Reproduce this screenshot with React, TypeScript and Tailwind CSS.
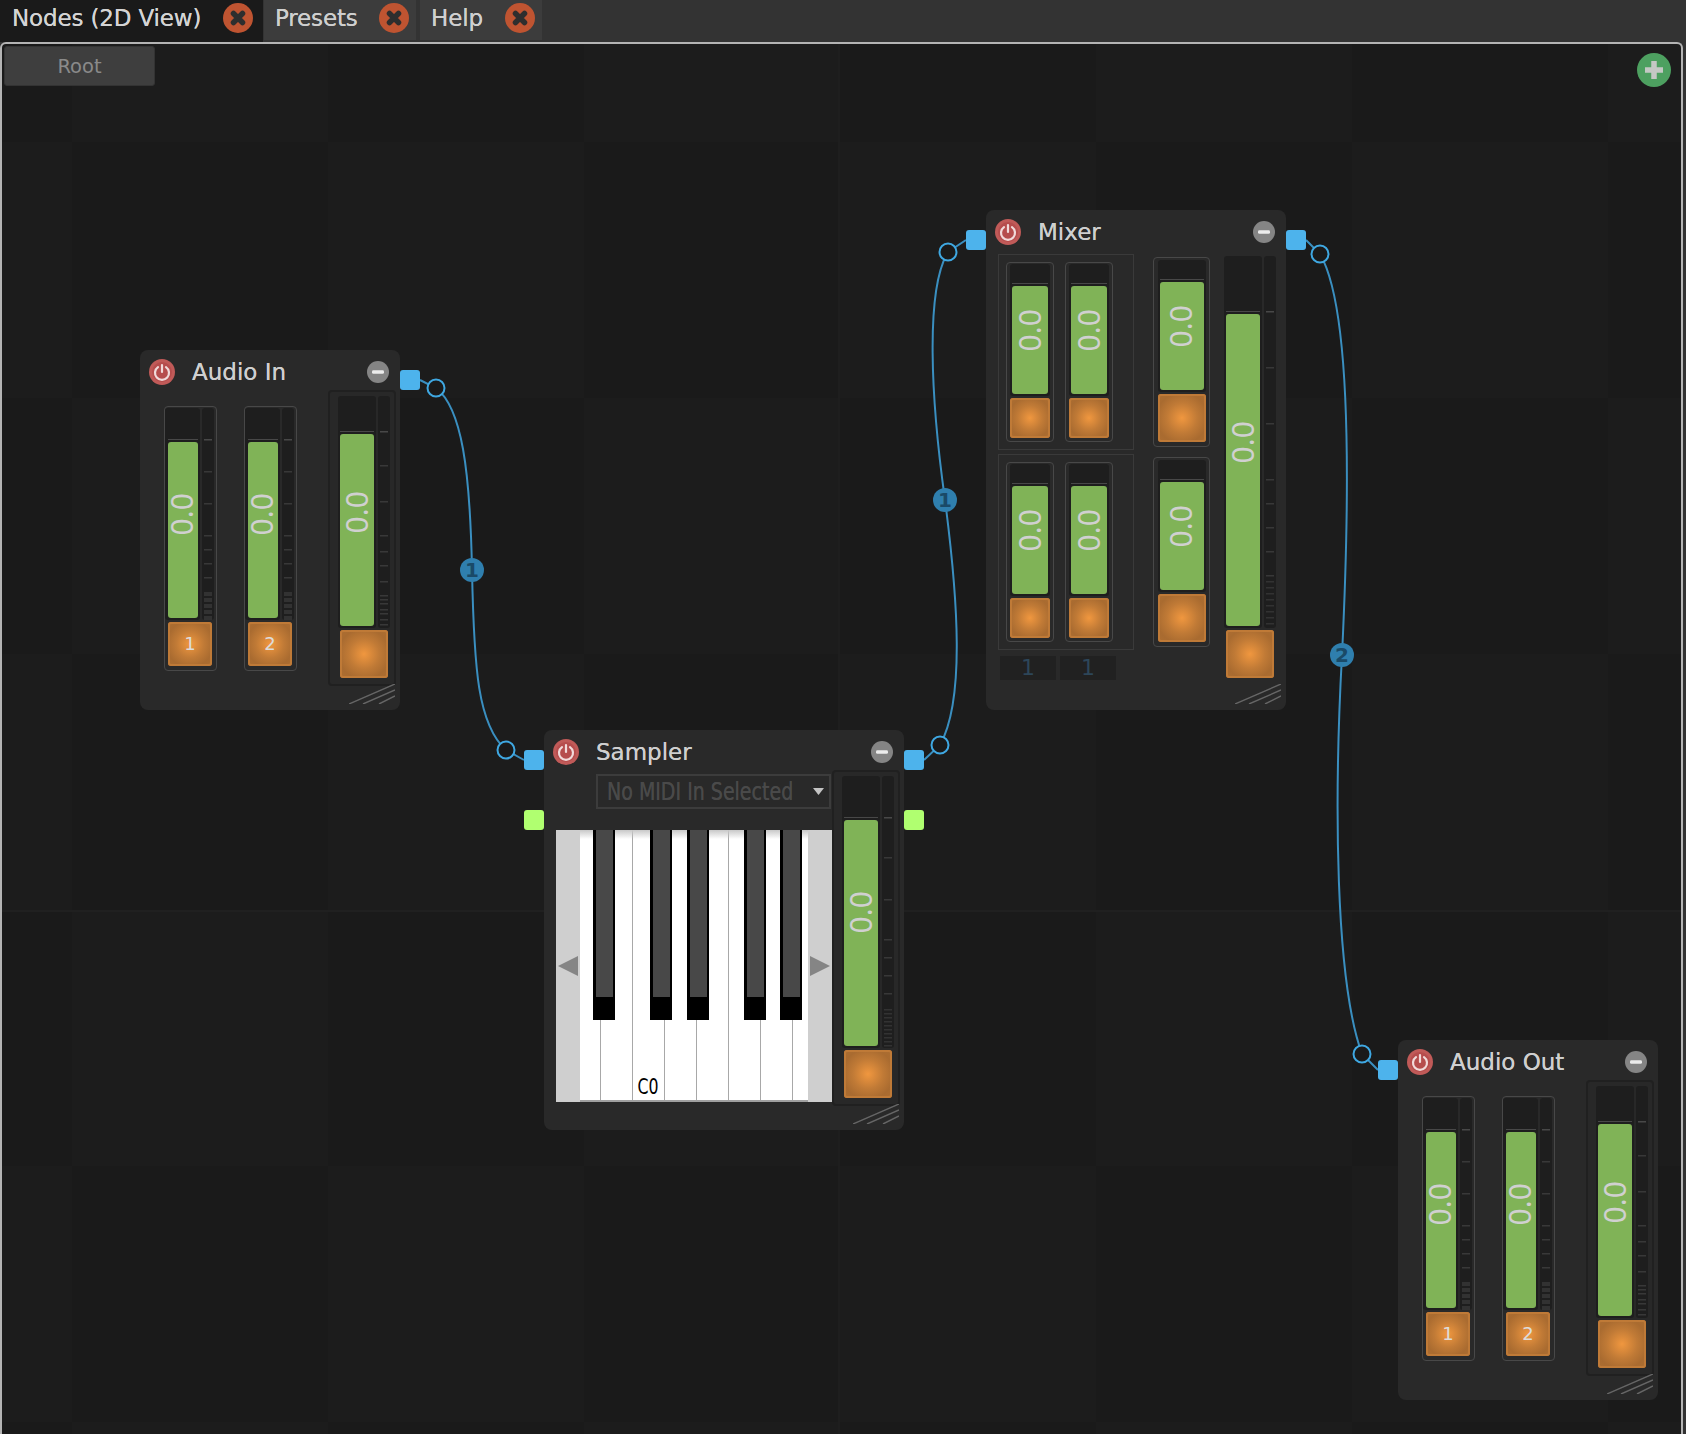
import React from "react";

const CloseIcon = () => (
  <svg width="30" height="30" viewBox="0 0 30 30" className="shrink-0">
    <circle cx="15" cy="15" r="15" fill="#bf5431" />
    <path d="M10.5 10.5 L19.5 19.5 M19.5 10.5 L10.5 19.5" stroke="#2e2e2e" strokeWidth="5.5" strokeLinecap="round" />
  </svg>
);

const PowerIcon = () => (
  <svg width="26" height="26" viewBox="0 0 26 26" className="shrink-0">
    <circle cx="13" cy="13" r="13" fill="#c05a58" />
    <circle cx="13" cy="13" r="10" fill="#b64d4d" />
    <path d="M9 8.2 A7 7 0 1 0 17 8.2" fill="none" stroke="#f1dada" strokeWidth="2.2" strokeLinecap="round" />
    <path d="M13 6 V13" stroke="#f1dada" strokeWidth="2.2" strokeLinecap="round" />
  </svg>
);

const MinusIcon = () => (
  <svg width="22" height="22" viewBox="0 0 22 22" className="shrink-0">
    <circle cx="11" cy="11" r="11" fill="#858585" />
    <rect x="5" y="9.2" width="12" height="3.6" rx="1.4" fill="#ececec" />
  </svg>
);

const Resizer = () => (
  <svg width="46" height="20" viewBox="0 0 46 20" className="absolute right-[5px] bottom-[6px]">
    <path d="M0 20 L46 0 M14 20 L46 6 M30 20 L46 12" stroke="#666666" strokeWidth="1.4" fill="none" />
  </svg>
);

const Port = ({ cls }: { cls: string }) => <div className={`absolute h-[20px] w-[20px] rounded-[3px] ${cls}`} />;

const Header = ({ title }: { title: string }) => (
  <div className="flex h-[26px] items-center pl-[9px] pr-[11px] mt-[9px]">
    <PowerIcon />
    <span className="ml-[17px] text-[23px] leading-none text-[#cfcfcf] [text-shadow:0_0_0.6px_#cfcfcf]">{title}</span>
    <span className="ml-auto">
      <MinusIcon />
    </span>
  </div>
);

const Meter = ({ cls, h, ticks, bars = [], barH = 4 }: { cls: string; h: number; ticks: number[]; bars?: number[]; barH?: number }) => (
  <div className={`shrink-0 rounded-[3px] bg-[#1e1e1e] ${cls}`}>
    <svg width="12" height={h} viewBox={`0 0 12 ${h}`} className="block">
      {ticks.map((y, i) => (
        <rect key={i} x="2" y={y} width="8" height="1.5" fill={i === 0 ? "#484848" : "#383838"} />
      ))}
      {bars.map((y, i) => (
        <rect key={i} x="2" y={y} width="8" height={barH} fill="#323232" />
      ))}
    </svg>
  </div>
);

const Slot = ({ slot, green, line, text }: { slot: string; green: string; line: string; text: string }) => (
  <div className={`flex shrink-0 flex-col items-center justify-end rounded-[3px] bg-[#1e1e1e] pb-[2px] ${slot}`}>
    <div className={`h-[1.5px] bg-[#484848] ${line}`} />
    <div className={`mt-[2px] flex items-start justify-center rounded-[3px] bg-[#80b357] ${green} ${text}`}>
      <span className="-ml-[1px] rotate-180 font-['Noto_Sans',sans-serif] text-[30px] font-normal leading-none text-[#d0d0d0] [writing-mode:vertical-rl]">
        0.0
      </span>
    </div>
  </div>
);

const Knob = ({ cls, label }: { cls: string; label?: string }) => (
  <div
    className={`flex shrink-0 items-center justify-center rounded-[3px] bg-[radial-gradient(circle,#f0973f_0%,#c07a36_45%,#a96b30_75%,#ad6e31_100%)] text-[18px] leading-none text-[#dcdcdc] shadow-[inset_0_0_0_2px_#bf7a37] ${cls}`}
  >
    {label}
  </div>
);

const audioTicks = [31, 63, 95, 127, 141, 155, 169];
const audioBars = [184, 190, 196, 202, 208];
const ChannelStrip = ({ label }: { label: string }) => (
  <div className="mt-[21px] flex h-[265px] w-[53px] shrink-0 flex-col rounded-[4px] border-[1.5px] border-[#484848] pt-[1px]">
    <div className="flex gap-[2px]">
      <Slot slot="h-[212px] w-[35px]" line="w-[30px]" green="h-[176px] w-[30px]" text="pt-[51px]" />
      <Meter cls="w-[12px]" h={212} ticks={audioTicks} bars={audioBars} />
    </div>
    <Knob cls="ml-[3px] mt-[2px] h-[44px] w-[44px]" label={label} />
  </div>
);

const MasterBox = ({ cls, children }: { cls: string; children: React.ReactNode }) => (
  <div className={`shrink-0 rounded-[4px] border-[2px] border-[#202020] bg-[#282828] pl-[8px] pt-[4px] ${cls}`}>{children}</div>
);

const AudioMaster = () => (
  <MasterBox cls="ml-[31px] mt-[5px] h-[296px] w-[68px]">
    <div className="flex gap-[2px]">
      <Slot slot="h-[232px] w-[38px]" line="w-[34px]" green="h-[192px] w-[34px]" text="pt-[57px]" />
      <Meter cls="w-[12px]" h={232} ticks={[35, 69, 105, 139, 155, 169, 185, 199, 203, 207, 213, 217, 223, 228]} />
    </div>
    <Knob cls="ml-[2px] mt-[2px] h-[48px] w-[48px]" />
  </MasterBox>
);

const AudioNode = ({ cls, title }: { cls: string; title: string }) => (
  <div className={`absolute h-[360px] w-[260px] rounded-[8px] bg-[#292929] ${cls}`}>
    <Header title={title} />
    <div className="flex items-start gap-[27px] pl-[24px]">
      <ChannelStrip label="1" />
      <ChannelStrip label="2" />
      <div className="-ml-[27px]">
        <AudioMaster />
      </div>
    </div>
    <Resizer />
  </div>
);

const MiniStrip = () => (
  <div className="flex h-[180px] w-[48px] flex-col items-center rounded-[4px] border-[1.5px] border-[#484848] pt-[1px]">
    <Slot slot="h-[132px] w-[40px]" line="w-[36px]" green="h-[108px] w-[36px]" text="pt-[23px]" />
    <Knob cls="mt-[2px] h-[40px] w-[40px]" />
  </div>
);

const WideStrip = () => (
  <div className="flex h-[190px] w-[57px] flex-col items-center rounded-[4px] border-[1.5px] border-[#484848] pt-[2px]">
    <Slot slot="h-[132px] w-[48px]" line="w-[44px]" green="h-[108px] w-[44px]" text="pt-[23px]" />
    <Knob cls="mt-[2px] h-[48px] w-[48px]" />
  </div>
);

const Group = () => (
  <div className="flex h-[196px] w-[136px] gap-[11px] border border-[#3a3a3a] pl-[7px] pt-[7px]">
    <MiniStrip />
    <MiniStrip />
  </div>
);

const IndexBox = () => (
  <div className="flex h-[24px] w-[56px] items-center justify-center bg-[#212121] text-[22px] leading-none text-[#2d4659]">1</div>
);

const mixerBars = Array.from({ length: 8 }, (_, i) => 325 + i * 6);

const Mixer = () => (
  <div className="absolute left-[984px] top-[166px] h-[500px] w-[300px] rounded-[8px] bg-[#292929]">
    <Header title="Mixer" />
    <div className="flex items-start pl-[12px]">
      <div className="mt-[9px] flex flex-col gap-[4px]">
        <Group />
        <Group />
        <div className="ml-[2px] mt-[2px] flex gap-[4px]">
          <IndexBox />
          <IndexBox />
        </div>
      </div>
      <div className="ml-[19px] mt-[12px] flex flex-col gap-[10px]">
        <WideStrip />
        <WideStrip />
      </div>
      <div className="ml-[14px] mt-[11px]">
        <div className="flex gap-[2px]">
          <Slot slot="h-[372px] w-[38px]" line="w-[34px]" green="h-[312px] w-[34px]" text="pt-[107px]" />
          <Meter cls="w-[12px]" h={372} ticks={[55, 111, 167, 223, 247, 271, 295, 319]} bars={mixerBars} barH={1.5} />
        </div>
        <Knob cls="ml-[2px] mt-[2px] h-[48px] w-[48px]" />
      </div>
    </div>
    <Resizer />
  </div>
);

const Triangle = ({ dir }: { dir: "l" | "r" }) => (
  <svg width="20" height="20" viewBox="0 0 20 20">
    <path d={dir === "l" ? "M0 10 L20 0 V20 Z" : "M20 10 L0 0 V20 Z"} fill="#858585" />
  </svg>
);

const whiteKeys = ["w-[21px]", "w-[32px]", "w-[32px]", "w-[32px]", "w-[32px]", "w-[32px]", "w-[32px]", "w-[15px]"];
const blackKeys = ["left-[13px]", "left-[70px]", "left-[107px]", "left-[164px]", "left-[200px]"];

const Keyboard = () => (
  <div className="mt-[21px] flex h-[272px] w-[276px]">
    <div className="flex w-[24px] items-center justify-center bg-[#cfcfcf]">
      <Triangle dir="l" />
    </div>
    <div className="relative flex w-[228px] border-b-[2px] border-[#a0a0a0] bg-white">
      {whiteKeys.map((w, i) => (
        <div
          key={i}
          className={`box-border flex h-full items-end justify-center ${w} ${i < whiteKeys.length - 1 ? "border-r-[1.5px] border-[#a8a8a8]" : ""}`}
        >
          {i === 2 && (
            <span className="mb-[2px] scale-x-75 font-['DejaVu_Sans',sans-serif] text-[21px] leading-none text-black">C0</span>
          )}
        </div>
      ))}
      <div className="absolute left-0 right-0 top-0 h-[9px] bg-gradient-to-b from-[#c8c8c8] to-transparent" />
      {blackKeys.map((l) => (
        <div key={l} className={`absolute top-0 h-[190px] w-[22px] bg-black ${l}`}>
          <div className="ml-[3px] h-[167px] w-[17px] bg-[#484848]" />
        </div>
      ))}
    </div>
    <div className="flex w-[24px] items-center justify-center bg-[#cfcfcf]">
      <Triangle dir="r" />
    </div>
  </div>
);

const samplerTicks = [41, 81, 123, 163, 181, 199, 217];
const samplerBars = Array.from({ length: 10 }, (_, i) => 233 + i * 4);

const Sampler = () => (
  <div className="absolute left-[542px] top-[686px] h-[400px] w-[360px] rounded-[8px] bg-[#292929]">
    <Header title="Sampler" />
    <div className="flex items-start pl-[12px]">
      <div className="flex w-[276px] shrink-0 flex-col">
        <div className="ml-[40px] mt-[9px] flex h-[35px] w-[235px] items-center overflow-hidden border-[2px] border-[#3c3c3c] pl-[9px]">
          <span className="w-[184px] origin-left scale-x-[0.76] whitespace-nowrap text-[25px] leading-none text-[#4a4a4a] [text-shadow:0_0_0.6px_#4a4a4a]">
            No MIDI In Selected
          </span>
          <svg width="11" height="7" viewBox="0 0 11 7" className="ml-auto mr-[5px]">
            <path d="M0 0 H11 L5.5 7 Z" fill="#c4c4c4" />
          </svg>
        </div>
        <Keyboard />
      </div>
      <MasterBox cls="mt-[5px] h-[336px] w-[68px]">
        <div className="flex gap-[2px]">
          <Slot slot="h-[272px] w-[38px]" line="w-[34px]" green="h-[226px] w-[34px]" text="pt-[71px]" />
          <Meter cls="w-[12px]" h={272} ticks={samplerTicks} bars={samplerBars} barH={1.5} />
        </div>
        <Knob cls="ml-[2px] mt-[2px] h-[48px] w-[48px]" />
      </MasterBox>
    </div>
    <Resizer />
  </div>
);

const Cables = () => (
  <svg width="1686" height="1434" viewBox="0 0 1686 1434" className="pointer-events-none absolute -left-[2px] -top-[44px]">
    <g fill="none" stroke="#3a8fc0" strokeWidth="2">
      <path d="M420 380 L436 388 C462 408 470 470 472 570 C474 670 478 725 506 750 L524 760" />
      <path d="M924 760 L940 745 C965 700 958 600 945 500 C931 400 925 290 948 252 L966 240" />
      <path d="M1306 240 L1320 254 C1347 300 1352 450 1342 655 C1334 800 1335 980 1362 1054 L1378 1070" />
    </g>
    <g fill="#1a1a1a" stroke="#3fa8e2" strokeWidth="2">
      <circle cx="436" cy="388" r="8.5" />
      <circle cx="506" cy="750" r="8.5" />
      <circle cx="940" cy="745" r="8.5" />
      <circle cx="948" cy="252" r="8.5" />
      <circle cx="1320" cy="254" r="8.5" />
      <circle cx="1362" cy="1054" r="8.5" />
    </g>
    <g fill="#2f7fae">
      <circle cx="472" cy="570" r="12" />
      <circle cx="945" cy="500" r="12" />
      <circle cx="1342" cy="655" r="12" />
    </g>
    <g fill="#1a4a68" fontSize="20" fontWeight="700" textAnchor="middle" fontFamily="'DejaVu Sans', sans-serif">
      <text x="472" y="577">1</text>
      <text x="945" y="507">1</text>
      <text x="1342" y="662">2</text>
    </g>
  </svg>
);

const tabs = [
  { label: "Nodes (2D View)", cls: "w-[263px] h-[42px] bg-[#1a1a1a] pl-[12px] pr-[10px] text-[#d4d4d4]" },
  { label: "Presets", cls: "ml-[1px] w-[152px] h-[40px] bg-[#3c3c3c] pl-[11px] pr-[7px] text-[#cfcfcf]" },
  { label: "Help", cls: "ml-[4px] w-[122px] h-[40px] bg-[#3c3c3c] pl-[11px] pr-[7px] text-[#cfcfcf]" },
];

export default function App() {
  return (
    <div className="flex h-[1434px] w-[1686px] flex-col overflow-hidden bg-[#333333] font-['DejaVu_Sans',sans-serif]">
      <div className="flex h-[42px] shrink-0 items-start">
        {tabs.map((t) => (
          <div key={t.label} className={`flex items-start justify-between pt-[3px] text-[23px] leading-[30px] tracking-[-0.15px] [text-shadow:0_0_0.6px_#cfcfcf] ${t.cls}`}>
            <span>{t.label}</span>
            <CloseIcon />
          </div>
        ))}
      </div>
      <div className="relative w-[1683px] flex-1 rounded-t-[6px] border-l-[2px] border-r-[2px] border-t-[2px] border-[#b4b4b4] pl-[2px] pt-[2px] [background:linear-gradient(#202020,#202020)_0_866px/100%_2px_no-repeat,linear-gradient(#1e1e1e,#1e1e1e)_836px_0/2px_100%_no-repeat,conic-gradient(#1a1a1a_25%,#1c1c1c_0_50%,#1a1a1a_0_75%,#1c1c1c_0)_70px_866px/512px_512px]">
        <div className="flex h-[40px] w-[151px] items-center justify-center rounded-[3px] border border-[#333333] bg-[#3e3e3e] pt-[1px] text-[19.5px] leading-none text-[#8a8a8a]">
          Root
        </div>
        <svg width="34" height="34" viewBox="0 0 34 34" className="absolute right-[10px] top-[9px]">
          <circle cx="17" cy="17" r="17" fill="#4da060" />
          <path d="M17 8 V26 M8 17 H26" stroke="#c4c8c4" strokeWidth="5.5" />
        </svg>
        <Cables />
        <AudioNode cls="left-[138px] top-[306px]" title="Audio In" />
        <Port cls="left-[398px] top-[326px] bg-[#4db3ec]" />
        <Sampler />
        <Port cls="left-[522px] top-[706px] bg-[#4db3ec]" />
        <Port cls="left-[522px] top-[766px] bg-[#b0ff70]" />
        <Port cls="left-[902px] top-[706px] bg-[#4db3ec]" />
        <Port cls="left-[902px] top-[766px] bg-[#b0ff70]" />
        <Mixer />
        <Port cls="left-[964px] top-[186px] bg-[#4db3ec]" />
        <Port cls="left-[1284px] top-[186px] bg-[#4db3ec]" />
        <AudioNode cls="left-[1396px] top-[996px]" title="Audio Out" />
        <Port cls="left-[1376px] top-[1016px] bg-[#4db3ec]" />
      </div>
    </div>
  );
}
